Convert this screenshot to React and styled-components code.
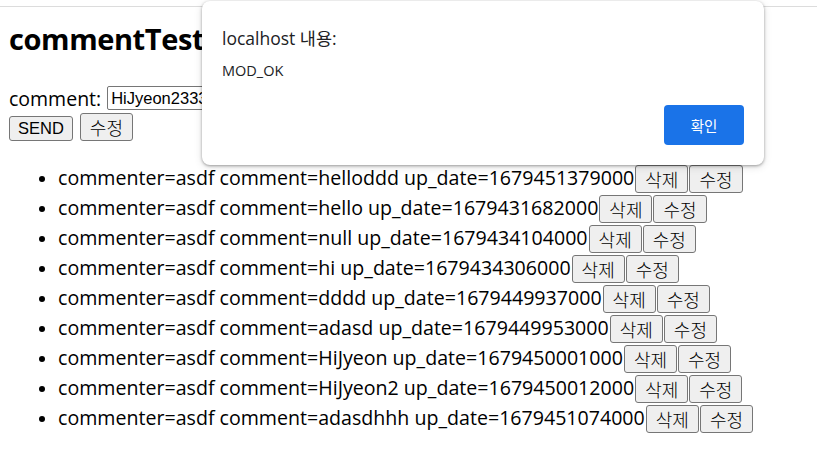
import React from 'react';
import styled, { createGlobalStyle } from 'styled-components';

const GlobalStyle = createGlobalStyle`
  html, body {
    margin: 0;
    background: #fff;
  }
  body {
    font-family: "Open Sans", "Noto Sans CJK KR", sans-serif;
    color: #000;
    overflow: hidden;
  }
`;

const Screen = styled.div`
  position: relative;
  width: 817px;
  height: 450px;
  overflow: hidden;
`;

const ChromeEdge = styled.div`
  height: 6px;
  border-bottom: 1px solid #dcdcdc;
`;

const Page = styled.div`
  padding: 0 9px;
`;

const Title = styled.h2`
  margin: 12px 0 26px;
  font-size: 29px;
  font-weight: 700;
  line-height: 40px;
  letter-spacing: -0.4px;
`;

const FormRow = styled.div`
  display: flex;
  align-items: center;
  gap: 6px;
  font-size: 19.5px;
  height: 26px;
`;

const TextInput = styled.input`
  width: 190px;
  height: 24px;
  box-sizing: border-box;
  border: 1px solid #767676;
  border-radius: 2px;
  padding: 0 3px;
  font-family: "Liberation Sans", Arial, sans-serif;
  font-size: 16.5px;
  color: #000;
`;

const ButtonRow = styled.div`
  display: flex;
  align-items: flex-end;
  gap: 7px;
  margin-top: 2px;
`;

const Btn = styled.button`
  box-sizing: border-box;
  height: ${(p) => (p.$ko ? '28px' : '25px')};
  padding: 0 ${(p) => (p.$ko ? '9px' : '8px')};
  background: #efefef;
  border: 1px solid #767676;
  border-radius: 3px;
  font-family: ${(p) =>
    p.$ko ? '"Noto Sans CJK KR", sans-serif' : '"Liberation Sans", Arial, sans-serif'};
  font-size: ${(p) => (p.$ko ? '18px' : '16.5px')};
  font-weight: ${(p) => (p.$ko ? 300 : 400)};
  line-height: 1;
  color: #000;
  margin: 0;
`;

const List = styled.ul`
  margin: 22px 0 0;
  padding-left: 49px;
  font-size: 19.6px;
`;

const Item = styled.li`
  height: 30px;
  line-height: 30px;
  white-space: nowrap;
  &::marker {
    font-size: 18px;
  }
`;

const ItemButtons = styled.span`
  display: inline-flex;
  vertical-align: middle;
  gap: 1px;
  margin-left: 1px;
  position: relative;
  top: -1px;
`;

const Dialog = styled.div`
  position: absolute;
  left: 202px;
  top: 1px;
  width: 562px;
  height: 164px;
  box-sizing: border-box;
  background: #fff;
  border-radius: 8px;
  box-shadow: 0 1px 3px rgba(0, 0, 0, 0.35), 0 2px 8px rgba(0, 0, 0, 0.12);
  padding: 25px 20px 20px;
  display: flex;
  flex-direction: column;
`;

const DialogTitle = styled.div`
  font-size: 17.5px;
  color: #202124;
  line-height: 24px;
`;

const DialogMessage = styled.div`
  font-size: 14.5px;
  color: #202124;
  margin-top: 11px;
  line-height: 20px;
`;

const DialogFooter = styled.div`
  margin-top: auto;
  display: flex;
  justify-content: flex-end;
`;

const ConfirmButton = styled.button`
  width: 80px;
  height: 40px;
  background: #1a73e8;
  color: #fff;
  border: none;
  border-radius: 4px;
  font-family: "Noto Sans CJK KR", sans-serif;
  font-size: 14.5px;
`;

const comments = [
  { text: 'helloddd', date: '1679451379000' },
  { text: 'hello', date: '1679431682000' },
  { text: 'null', date: '1679434104000' },
  { text: 'hi', date: '1679434306000' },
  { text: 'dddd', date: '1679449937000' },
  { text: 'adasd', date: '1679449953000' },
  { text: 'HiJyeon', date: '1679450001000' },
  { text: 'HiJyeon2', date: '1679450012000' },
  { text: 'adasdhhh', date: '1679451074000' },
];

export default function App() {
  return (
    <Screen>
      <GlobalStyle />
      <ChromeEdge />
      <Page>
        <Title>commentTest</Title>
        <FormRow>
          <span>comment:</span>
          <TextInput defaultValue="HiJyeon2333" />
        </FormRow>
        <ButtonRow>
          <Btn>SEND</Btn>
          <Btn $ko>수정</Btn>
        </ButtonRow>
        <List>
          {comments.map((c) => (
            <Item key={c.date}>
              commenter=asdf comment={c.text} up_date={c.date}
              <ItemButtons>
                <Btn $ko>삭제</Btn>
                <Btn $ko>수정</Btn>
              </ItemButtons>
            </Item>
          ))}
        </List>
      </Page>
      <Dialog>
        <DialogTitle>localhost 내용:</DialogTitle>
        <DialogMessage>MOD_OK</DialogMessage>
        <DialogFooter>
          <ConfirmButton>확인</ConfirmButton>
        </DialogFooter>
      </Dialog>
    </Screen>
  );
}
